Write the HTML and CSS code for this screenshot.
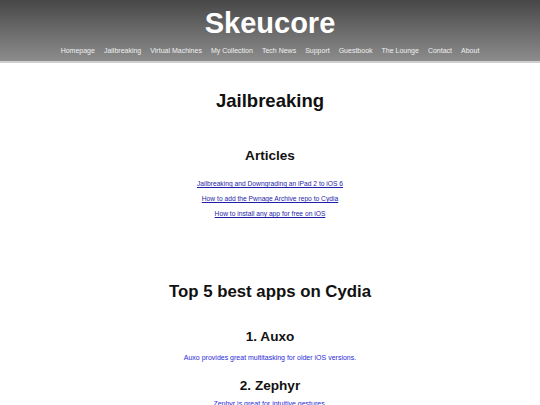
FILE: index.html
```html
<!DOCTYPE html>
<html>
<head>
<meta charset="utf-8">
<title>Skeucore - Jailbreaking</title>
<link rel="stylesheet" href="styles.css">
</head>
<body>
<header class="site-header">
  <div class="site-title">Skeucore</div>
  <nav class="site-nav">
    <a href="#">Homepage</a>
    <a href="#">Jailbreaking</a>
    <a href="#">Virtual Machines</a>
    <a href="#">My Collection</a>
    <a href="#">Tech News</a>
    <a href="#">Support</a>
    <a href="#">Guestbook</a>
    <a href="#">The Lounge</a>
    <a href="#">Contact</a>
    <a href="#">About</a>
  </nav>
</header>
<main class="content">
  <h1 class="page-title">Jailbreaking</h1>
  <h2 class="section-title">Articles</h2>
  <ul class="article-list">
    <li><a href="#">Jailbreaking and Downgrading an iPad 2 to iOS 6</a></li>
    <li><a href="#">How to add the Pwnage Archive repo to Cydia</a></li>
    <li><a href="#">How to install any app for free on iOS</a></li>
  </ul>
  <h1 class="page-title top-apps">Top 5 best apps on Cydia</h1>
  <h2 class="app-title first">1. Auxo</h2>
  <p class="app-desc">Auxo provides great multitasking for older iOS versions.</p>
  <h2 class="app-title">2. Zephyr</h2>
  <p class="app-desc last">Zephyr is great for intuitive gestures.</p>
</main>
</body>
</html>
```
FILE: styles.css
```css
html, body {
  margin: 0;
  padding: 0;
  background: #ffffff;
  font-family: "Liberation Sans", Arial, sans-serif;
}
.site-header {
  background: linear-gradient(to bottom, #474747 0%, #6a6a6a 50%, #8c8c8c 100%);
  padding: 6px 0 4px;
  border-bottom: 2px solid #cfcfcf;
  text-align: center;
}
.site-title {
  color: #ffffff;
  font-size: 29px;
  font-weight: bold;
  line-height: 34px;
}
.site-nav {
  margin-top: 5px;
  display: flex;
  justify-content: center;
  gap: 9px;
  line-height: 12px;
}
.site-nav a {
  color: #f0f0f0;
  font-size: 7px;
  text-decoration: none;
}
.content {
  text-align: center;
}
.page-title {
  margin: 0;
  font-size: 18.5px;
  line-height: 22px;
  font-weight: bold;
  color: #111;
  padding-top: 27px;
}
.section-title {
  margin: 36px 0 0;
  font-size: 13.6px;
  line-height: 16px;
  color: #111;
}
.article-list {
  list-style: none;
  margin: 12px 0 0;
  padding: 0;
}
.article-list li {
  font-size: 6.7px;
  line-height: 15px;
}
.article-list a {
  color: #1e1ea8;
}
.top-apps {
  font-size: 16.8px;
  padding-top: 60px;
}
.app-title {
  margin: 0;
  padding-top: 15px;
  font-size: 13.6px;
  line-height: 16px;
  color: #111;
}
.app-title.first {
  padding-top: 26px;
}
.app-desc {
  margin: 8px 0 0;
  font-size: 7px;
  line-height: 10px;
  color: #2a2ad8;
}
.app-desc.last {
  margin-top: 5px;
}
```
